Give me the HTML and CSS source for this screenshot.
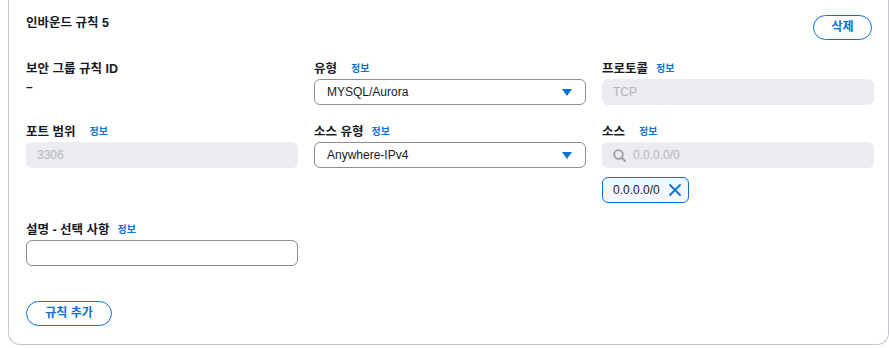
FILE: index.html
```html
<!doctype html>
<html lang="ko">
<head>
	<meta charset="UTF-8">
	<title>인바운드 규칙</title>
	<link rel="stylesheet" href="styles.css">
</head>
<body>
	<div class="rule_card">
		<div class="rule_head">
			<h3 class="rule_title">인바운드 규칙 5</h3>
			<a class="btn_pill del_btn">삭제</a>
		</div>
		<div class="rule_grid">
			<div class="field">
				<div class="field_label">보안 그룹 규칙 ID</div>
				<div class="field_value">–</div>
			</div>
			<div class="field">
				<div class="field_label"><span>유형</span><a class="info wide">정보</a></div>
				<div class="select_box">
					<span>MYSQL/Aurora</span>
					<svg class="caret" width="10" height="7" viewBox="0 0 10 7"><path d="M0 0 H10 L5 7 Z" fill="#0972d3"/></svg>
				</div>
			</div>
			<div class="field">
				<div class="field_label"><span>프로토콜</span><a class="info">정보</a></div>
				<div class="input_box disabled">TCP</div>
			</div>

			<div class="field">
				<div class="field_label"><span>포트 범위</span><a class="info wide">정보</a></div>
				<div class="input_box disabled">3306</div>
			</div>
			<div class="field">
				<div class="field_label"><span>소스 유형</span><a class="info">정보</a></div>
				<div class="select_box">
					<span>Anywhere-IPv4</span>
					<svg class="caret" width="10" height="7" viewBox="0 0 10 7"><path d="M0 0 H10 L5 7 Z" fill="#0972d3"/></svg>
				</div>
			</div>
			<div class="field">
				<div class="field_label"><span>소스</span><a class="info wide">정보</a></div>
				<div class="input_box search">
					<svg class="search_icon" width="13" height="13" viewBox="0 0 13 13"><circle cx="5.5" cy="5.5" r="4.3" fill="none" stroke="#9b9ba4" stroke-width="1.8"/><path d="M8.7 8.7 L12 12" stroke="#9b9ba4" stroke-width="1.8" stroke-linecap="round"/></svg>
					<span class="placeholder">0.0.0.0/0</span>
				</div>
				<div class="token">
					<span>0.0.0.0/0</span>
					<svg class="token_x" width="12" height="12" viewBox="0 0 12 12"><path d="M1 1 L11 11 M11 1 L1 11" stroke="#0972d3" stroke-width="1.8" stroke-linecap="round"/></svg>
				</div>
			</div>

			<div class="field">
				<div class="field_label"><span>설명 - 선택 사항</span><a class="info">정보</a></div>
				<div class="input_box"></div>
			</div>
		</div>
		<a class="btn_pill add_btn">규칙 추가</a>
	</div>
</body>
</html>
```

FILE: styles.css
```css
body{
	margin:0;
	background:#fff;
	font-family:"Liberation Sans","Noto Sans CJK KR",sans-serif;
	font-size:12px;
	color:#16191f;
}
.rule_card{
	margin-left:8px;
	height:329px;
	padding:15px 14px 0 17px;
	border:1px solid #c6c6cd;
	border-top:none;
	border-radius:0 0 12px 12px;
}
.rule_head{
	display:flex;
	justify-content:space-between;
	align-items:flex-start;
	margin-right:2px;
}
.rule_title{
	margin:0;
	font-size:12.5px;
	font-weight:bold;
	line-height:16px;
}
.btn_pill{
	display:block;
	height:23px;
	line-height:23px;
	border:1px solid #0972d3;
	border-radius:13px;
	color:#0972d3;
	font-weight:bold;
	font-size:12px;
	text-align:center;
	cursor:pointer;
}
.del_btn{
	width:57px;
}
.rule_grid{
	display:grid;
	grid-template-columns:272px 272px 272px;
	column-gap:16px;
	row-gap:17px;
	margin-top:19px;
}
.field_label{
	display:flex;
	align-items:center;
	height:16px;
	font-weight:bold;
	font-size:12.5px;
	margin-bottom:4px;
}
.info{
	margin-left:8px;
	color:#0972d3;
	font-size:10px;
	font-weight:bold;
	cursor:pointer;
}
.info.wide{
	margin-left:14px;
}
.field_value{
	margin-top:2px;
	font-weight:bold;
	line-height:16px;
}
.select_box,
.input_box{
	box-sizing:border-box;
	height:26px;
	border:1px solid #8c8c94;
	border-radius:6px;
	padding:0 12px;
	display:flex;
	align-items:center;
	font-size:12px;
}
.select_box{
	justify-content:space-between;
}
.caret{
	margin-right:1px;
}
.input_box.disabled,
.input_box.search{
	border-color:#ebebf0;
	background:#ebebf0;
	color:#b4b4bc;
	padding-left:10px;
}
.search_icon{
	margin-right:7px;
}
.token{
	display:inline-flex;
	align-items:center;
	box-sizing:border-box;
	height:26px;
	margin-top:9px;
	padding:0 7px 0 10px;
	border:1px solid #0972d3;
	border-radius:6px;
	background:#f2f8fd;
	font-size:12px;
}
.token_x{
	margin-left:9px;
}
.add_btn{
	width:84px;
	margin-top:35px;
}
```
